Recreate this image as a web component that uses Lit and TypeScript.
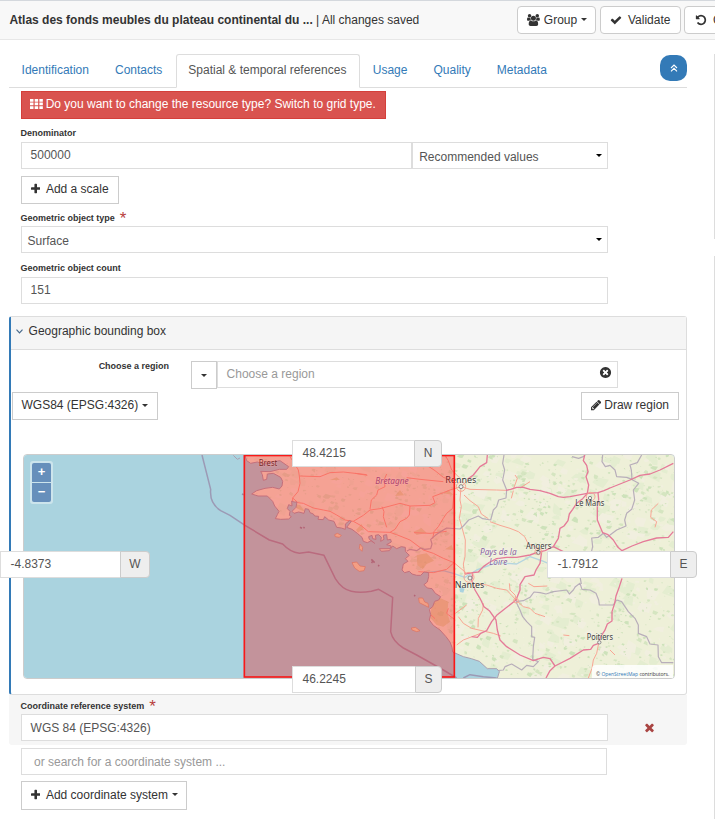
import { LitElement, html, css, svg } from "lit";
import { customElement, property } from "lit/decorators.js";

const ICONS: Record<string, { x?: number; w: number; d: string }> = {
  users: { w: 1920, d: "M593 896q-162 5-265 128h-134q-82 0-138-40.5t-56-118.5q0-353 124-353 6 0 43.5 21t97.5 42.5 119 21.5q67 0 133-23-5 37-5 66 0 139 81 256zm1071 637q0 120-73 189.5t-194 69.5h-874q-121 0-194-69.5t-73-189.5q0-53 3.5-103.5t14-109 26.5-108.5 43-97.5 62-81 85.5-53.5 111.5-20q10 0 43 21.5t73 48 107 48 135 21.5 135-21.5 107-48 73-48 43-21.5q61 0 111.5 20t85.5 53.5 62 81 43 97.5 26.5 108.5 14 109 3.5 103.5zm-1024-1277q0 106-75 181t-181 75-181-75-75-181 75-181 181-75 181 75 75 181zm704 384q0 159-112.5 271.5t-271.5 112.5-271.5-112.5-112.5-271.5 112.5-271.5 271.5-112.5 271.5 112.5 112.5 271.5zm576 225q0 78-56 118.5t-138 40.5h-134q-103-123-265-128 81-117 81-256 0-29-5-66 66 23 133 23 59 0 119-21.5t97.5-42.5 43.5-21q124 0 124 353zm-128-609q0 106-75 181t-181 75-181-75-75-181 75-181 181-75 181 75 75 181z" },
  check: { w: 1792, d: "M1671 566q0 40-28 68l-724 724-136 136q-28 28-68 28t-68-28l-136-136-362-362q-28-28-28-68t28-68l136-136q28-28 68-28t68 28l294 295 656-657q28-28 68-28t68 28l136 136q28 28 28 68z" },
  plus: { x: 192, w: 1408, d: "M1600 736v192q0 40-28 68t-68 28h-416v416q0 40-28 68t-68 28h-192q-40 0-68-28t-28-68v-416h-416q-40 0-68-28t-28-68v-192q0-40 28-68t68-28h416v-416q0-40 28-68t68-28h192q40 0 68 28t28 68v416h416q40 0 68 28t28 68z" },
  times: { w: 1792, d: "M1490 1322q0 40-28 68l-136 136q-28 28-68 28t-68-28l-294-294-294 294q-28 28-68 28t-68-28l-136-136q-28-28-28-68t28-68l294-294-294-294q-28-28-28-68t28-68l136-136q28-28 68-28t68 28l294 294 294-294q28-28 68-28t68 28l136 136q28 28 28 68t-28 68l-294 294 294 294q28 28 28 68z" },
  timesCircle: { w: 1792, d: "M1277 1122q0-26-19-45l-181-181 181-181q19-19 19-45 0-27-19-46l-90-90q-19-19-46-19-26 0-45 19l-181 181-181-181q-19-19-45-19-27 0-46 19l-90 90q-19 19-19 46 0 26 19 45l181 181-181 181q-19 19-19 45 0 27 19 46l90 90q19 19 46 19 26 0 45-19l181-181 181 181q19 19 45 19 27 0 46-19l90-90q19-19 19-46zm387-226q0 209-103 385.5t-279.5 279.5-385.5 103-385.5-103-279.5-279.5-103-385.5 103-385.5 279.5-279.5 385.5-103 385.5 103 279.5 279.5 103 385.5z" },
  pencil: { x: 128, w: 1536, d: "M491 1536l91-91-235-235-91 91v107h128v128h107zm523-928q0-22-22-22-10 0-17 7l-542 542q-7 7-7 17 0 22 22 22 10 0 17-7l542-542q7-7 7-17zm-54-192l416 416-832 832h-416v-416zm683 96q0 53-37 90l-166 166-416-416 166-165q36-38 90-38 53 0 91 38l235 234q37 39 37 91z" },
  undo: { w: 1792, d: "M1664 896q0 156-61 298t-164 245-245 164-298 61q-172 0-327-72.5t-264-204.5q-7-10-6.5-22.5t8.5-20.5l137-138q10-9 25-9 16 2 23 12 73 95 179 147t225 52q104 0 198.5-40.5t163.5-109.5 109.5-163.5 40.5-198.5-40.5-198.5-109.5-163.5-163.5-109.5-198.5-40.5q-98 0-188 35.5t-160 101.5l137 138q31 30 14 69-17 40-59 40h-448q-26 0-45-19t-19-45v-448q0-42 40-59 39-17 69 14l130 129q107-101 244.5-156.5t284.5-55.5q156 0 298 61t245 164 164 245 61 298z" },
  th: { w: 1920, d: "M0 150h520v400H0zM700 150h520v400H700zM1400 150h520v400h-520zM0 690h520v400H0zM700 690h520v400H700zM1400 690h520v400h-520zM0 1230h520v400H0zM700 1230h520v400H700zM1400 1230h520v400h-520z" },
};

const icon = (name: string) => html`<svg class="icon ${name}" viewBox="${ICONS[name].x ?? 0} 0 ${ICONS[name].w} 1792"><path d=${ICONS[name].d}></path></svg>`;
const caret = html`<i class="caret"></i>`;

const LAND =
  "M40 30L50 62 62 70 82 66 100 72 118 66 150 62 176 80 170 88 148 88 120 95 92 94 97 104 100 121 110 118 112 102 130 100 152 112 158 124 156 138 148 147 128 142 105 145 80 152 65 162 84 168 112 168 128 184 134 198 147 214 142 224 136 236 152 238 176 237 184 230 178 226 180 214 172 206 176 194 186 198 185 183 192 186 201 186 198 202 186 214 192 220 206 216 222 220 226 206 236 208 240 218 250 222 254 228 266 229 264 238 280 239 284 230 296 240 312 244 320 262 334 264 346 268 346 252 358 242 364 244 350 262 366 268 382 280 396 292 400 304 412 308 424 302 434 310 418 298 416 290 426 286 428 296 438 298 436 286 446 284 454 292 452 304 462 298 460 286 470 284 472 300 482 298 484 306 470 314 484 318 480 326 448 326 454 334 478 332 488 318 500 326 514 320 526 322 526 334 538 346 526 356 534 364 520 372 516 390 524 398 538 394 546 402 560 406 572 406 582 396 596 398 596 410 592 426 582 434 592 444 606 446 616 460 632 470 626 480 614 484 608 500 598 508 602 524 598 540 610 556 630 570 648 590 660 606 666 622 668 636 700 650 724 656 748 664 772 686 800 686 808 695 800 722 L1350 722V30Z";

/* Vegetation blotches scattered by a seeded generator so the map is stable. */
const blotches = (() => {
  let s = 48271;
  const r = () => (s = (s * 16807) % 2147483647) / 2147483647;
  for (let i = 0; i < 20; i++) r();
  const tone: string[] = ["", "", "", ""];
  for (let i = 0; i < 2600; i++) {
    const x = 40 + r() * 1300;
    const y = 45 + r() * 670;
    const k = i < 500 ? 10 + r() * 16 : 2 + r() * r() * 10;
    const j = () => (0.4 + r() * 0.9) * k;
    const t = i < 500 ? (i % 2) * 2 : i % 5 === 0 ? 2 : i % 5 < 3 ? 1 : 3;
    tone[t] += `M${(x - j()).toFixed(0)} ${y.toFixed(0)}L${(x - k / 3).toFixed(0)} ${(y - j() * 0.8).toFixed(0)} ${(x + j()).toFixed(0)} ${(y - k / 3).toFixed(0)} ${(x + k / 2).toFixed(0)} ${(y + j() * 0.7).toFixed(0)} ${(x - k / 3).toFixed(0)} ${(y + j() * 0.5).toFixed(0)}Z`;
  }
  return tone;
})();

const MAJOR = [
  "M828 151L842 148 860 142 880 142 900 148 930 152 960 160 985 170 1000 172 1020 170 1040 166 1072 160 1104 158 1122 152 1140 144 1170 132 1200 120 1230 106 1260 102 1290 90 1330 70",
  "M1064 45L1060 62 1070 76 1074 95 1068 110 1076 135 1072 160 1058 176 1040 190 1028 208 1018 222 1014 242 1002 258 990 265 985 295 970 320 945 332 920 338 900 345 860 352 830 352 800 356 780 366 760 380 745 396 728 398 705 402",
  "M1104 158L1106 178 1102 200 1102 240 1118 278 1134 284 1150 300 1164 322 1176 332 1206 318 1240 305 1280 294 1315 292 1330 275",
  "M970 320L1000 335 1060 350 M1176 415L1168 440 1158 468 1154 490 1146 515 1146 543 1132 552 1124 572 1112 590 1106 610 1090 616 1082 628 1060 630 1020 655 975 678 960 692 948 714",
  "M728 398L725 420 735 450 750 475 762 500 778 512 798 540 802 570 810 600 830 620 870 645 910 662 940 652 960 656 975 678",
  "M935 335L930 370 918 390 912 405 885 410 870 434 870 450 858 480 820 510 800 526 785 545 770 572 752 580 742 592 725 590",
  "M772 45L770 68 750 80 730 105 712 118",
];
const MINOR = [
  "M180 50L205 90 208 108 270 110 300 98 340 96 410 104",
  "M208 108L210 130 204 155 188 174 188 194",
  "M188 174L204 188 220 190 250 204 280 210 300 214 320 225 345 240 370 244 395 258 415 275 480 277 500 284 540 300 580 330 610 340 640 355 672 368 710 400",
  "M370 244L400 226 420 210 450 206 480 198 510 190 540 198 600 196 615 188 608 170 640 158 660 150 693 140",
  "M420 208L424 180 440 165 444 150 465 140 462 120 470 102",
  "M540 198L538 225 530 235 510 245 495 268 480 277",
  "M575 70L600 82 615 92 640 112 675 125 M530 113L570 118 640 125",
  "M645 45L655 62 665 90 690 115 M672 160L668 205 650 220 640 235 625 260 612 275 608 296",
  "M552 278L600 280 650 274 M565 395L610 398 650 388 672 368",
  "M456 200L462 215 460 230 470 262 M375 100L412 106",
  "M655 505L650 520 656 525 676 540 M602 524L615 536",
  "M693 140L690 180 694 200 688 235 698 270 706 300 705 350 700 372 704 402",
  "M702 165L720 182 745 200 754 222 775 236 M780 245L810 256 840 265 865 275 884 290 895 312 915 320 930 335",
  "M730 430L770 435 800 445 830 450 845 466 858 480",
  "M858 480L880 500 900 505 915 520 945 530 M858 480L856 466 840 450 838 430 M760 490L758 510 745 535 744 562",
  "M685 530L700 550 725 565 790 580 812 588 M710 495L676 520",
  "M752 580L700 600 680 615 M1106 610L1100 640 1090 660 1086 685 1075 714",
  "M1285 190L1264 210 1262 232 1280 245 1275 262 M850 148L862 115 855 105 M870 144L900 125 M895 430L912 440 952 438",
  "M850 152L844 175 M1000 585L1018 587 M1140 630L1155 645 M693 140L720 148 800 150 828 151 M693 140L728 108",
];
const BORDERS = [
  "M530 334L540 328 560 332 572 324 584 328 602 326 606 312 602 298 616 286 630 276 650 264 690 267 700 258 716 240 745 228 758 236 782 240 790 210 800 200 806 180 828 174 830 150 818 120 824 90 818 70 822 45",
  "M858 485L880 482 900 472 912 456 930 458 948 462 970 455 1010 450 1018 462 1030 450 1036 440 1050 430 1056 448 1080 450 1098 460 1106 480 1108 495 1150 495 1160 480 1175 485 1195 515 1215 535 1225 555 1225 580 1250 590 1260 612 1284 615 1285 650 1295 668 1330 668",
  "M858 485L870 510 878 530 890 545 905 560 905 590 914 592 910 620 908 658 925 665 910 680 890 676 875 690 845 672 825 680 820 690 802 692",
  "M1118 45L1116 65 1126 80 1140 76 1155 90 1160 110 1190 112 1206 118 1204 90 1200 75 1222 68 1235 45",
  "M1204 118L1226 130 1210 150 1214 180 1205 208 1190 220 1184 240 1188 258 1160 270 1140 285 1130 292 1120 280 1105 292 1085 294 1088 320 1082 345",
  "M1026 50L1046 55 1060 50 1065 45 M1050 410L1054 432",
];

@customElement("region-map")
export class RegionMap extends LitElement {
  static styles = css`
    :host { display: block; }
    svg { display: block; width: 100%; height: 100%; }
    text { font-family: "Noto Sans", sans-serif; font-size: 24px; fill: #3a3a3a; stroke: #fff; stroke-opacity: 0.4; stroke-width: 3px; paint-order: stroke; }
    .region { font-style: italic; fill: #8a65a0; }
    .sea-fill { fill: #aad3df; }
    .land { fill: #eef0d8; }
    .t0 { fill: #dfebcb; } .t1 { fill: #c8dfb4; } .t2 { fill: #f3efe2; } .t3 { fill: #bddbab; }
    .blot { opacity: 0.66; }
    .major, .minor, .border, .sea, .river { fill: none; stroke-linejoin: round; }
    .major { stroke: #e57a98; stroke-width: 4px; }
    .minor { stroke: #f8a594; stroke-width: 3px; }
    .border { stroke: #b8aeba; stroke-width: 3.6px; }
    .sea { stroke: #9c9ab5; stroke-width: 4.5px; }
    .river { stroke: #b4d5df; stroke-width: 4px; }
    .coast { fill: none; stroke: #aaa0b0; stroke-width: 3px; }
    .marsh { fill: #d3c888; opacity: 0.5; }
    .haze { fill: #f6dcd2; opacity: 0.35; }
    .isle { fill: #eee3bd; stroke: #cf9e83; stroke-width: 2px; }
    .rock { fill: none; stroke: #9390a8; stroke-width: 5px; }
    .town { fill: #eee; stroke: #777; stroke-width: 2.5px; }
    .box { fill: rgba(255, 0, 0, 0.3); stroke: #f81919; stroke-width: 5px; }
  `;

  render() {
    return html`<svg viewBox="-618 45 1950 669" preserveAspectRatio="none">
      <defs><clipPath id="shore"><path d=${LAND}></path></clipPath></defs>
      <rect class="sea-fill" x="-618" y="45" width="1950" height="669"></rect>
      <path class="land" d=${LAND}></path>
      <g clip-path="url(#shore)">
        <g class="blot">${[0, 2, 1, 3].map((t) => svg`<path class="t${t}" d=${blotches[t]}></path>`)}</g>
        <rect class="haze" x="40" y="45" width="633" height="670"></rect>
        <path class="marsh" d="M560 345L590 340 612 362 590 372 578 388 562 375ZM604 500L625 472 655 485 652 520 660 545 640 560 620 555 602 535ZM495 168L510 150 522 166ZM378 270L395 252 400 266 384 278ZM550 275L575 265 590 278 560 285ZM180 190L210 195 225 215 200 205ZM640 160L655 150 670 165ZM300 120L320 112 330 120ZM645 328L665 315 670 330Z"></path>
        <path class="river" d="M590 398L640 392 670 400 705 412 740 390 800 368 860 372 900 350 935 362 990 385 1050 390"></path>
        <path class="sea-fill" d="M688 446L694 440 704 446 700 458 690 456Z"></path>
        ${MINOR.map((d) => svg`<path class="minor" d=${d}></path>`)}
        ${BORDERS.map((d) => svg`<path class="border" d=${d}></path>`)}
        ${MAJOR.map((d) => svg`<path class="major" d=${d}></path>`)}
        <circle class="minor" cx="693" cy="140" r="14"></circle>
        <circle class="minor" cx="717" cy="412" r="15"></circle>
        <circle class="minor" cx="1082" cy="170" r="13"></circle>
        <circle class="minor" cx="925" cy="334" r="10"></circle>
        <circle class="minor" cx="858" cy="482" r="7"></circle>
      </g>
      <path class="coast" d=${LAND}></path>
      <path class="isle" d="M366 368L380 366 390 378 406 380 402 392 388 394 374 384ZM314 284L322 280 334 286 328 292 316 290ZM544 564L556 562 570 572 560 575 546 570ZM566 474L578 474 584 486 594 490 596 502 584 496 568 488ZM390 312L398 322 396 334 388 326Z"></path>
      <path class="rock" d="M424 358l6 6 4 4M444 376l4 2M210 262l6 3M220 262l4 2M552 466l4 2M36 162l5 2M424 366l4 2"></path>
      <path class="coast" d="M10 46L22 58 30 54"></path>
      <path class="sea" d="M-84 45L-58 148Q-62 190 -28 212L0 226 45 256 118 300 158 312Q180 336 208 340L236 336 282 346 316 416Q336 448 364 454 390 460 424 454L446 448 488 472 482 575Q488 604 520 624L560 645 640 690 680 714 M700 714L720 704 760 710 800 714"></path>
      <circle class="town" cx="693" cy="140" r="6"></circle>
      <circle class="town" cx="720" cy="414" r="6"></circle>
      <circle class="town" cx="1080" cy="174" r="5"></circle>
      <circle class="town" cx="925" cy="338" r="5"></circle>
      <circle class="town" cx="1108" cy="607" r="5"></circle>
      <text x="86" y="79" textLength="56" lengthAdjust="spacingAndGlyphs">Brest</text>
      <text class="region" x="436" y="131" textLength="100" lengthAdjust="spacingAndGlyphs">Bretagne</text>
      <text x="646" y="129" textLength="93" lengthAdjust="spacingAndGlyphs">Rennes</text>
      <text x="1036" y="198" textLength="87" lengthAdjust="spacingAndGlyphs">Le Mans</text>
      <text x="888" y="328" textLength="76" lengthAdjust="spacingAndGlyphs">Angers</text>
      <text x="674" y="445" textLength="89" lengthAdjust="spacingAndGlyphs">Nantes</text>
      <text x="1070" y="599" textLength="79" lengthAdjust="spacingAndGlyphs">Poitiers</text>
      <text class="region" x="750" y="344" textLength="110" lengthAdjust="spacingAndGlyphs">Pays de la</text>
      <text class="region" x="778" y="374" textLength="54" lengthAdjust="spacingAndGlyphs">Loire</text>
      <rect class="box" x="43" y="46.5" width="630" height="664.5"></rect>
    </svg>`;
  }
}

@customElement("coord-field")
export class CoordField extends LitElement {
  @property() value = "";
  @property() side = "";
  static styles = css`
    :host { display: flex; height: 27px; box-sizing: border-box; font: 12px/25px "Liberation Sans", Arial, sans-serif; color: #555; }
    .value { flex: 1; box-sizing: border-box; border: 1px solid #ddd; border-right: 0; background: #fff; padding-left: 9.5px; }
    .side { min-width: 27px; box-sizing: border-box; border: 1px solid #ccc; border-radius: 0 4px 4px 0; background: #eee; padding: 0 8.5px; text-align: center; }
  `;
  render() {
    return html`<div class="value">${this.value}</div><div class="side">${this.side}</div>`;
  }
}

@customElement("app-root")
export class AppRoot extends LitElement {
  static styles = css`
    :host { display: block; height: 819px; overflow: hidden; background: #fff; font: 12px/18px "Liberation Sans", Arial, sans-serif; color: #333; }
    * { box-sizing: border-box; }
    .icon { display: inline-block; height: 12px; width: auto; fill: currentColor; flex: none; }
    .header { height: 40px; display: flex; align-items: center; padding: 0 0 0 9.4px; border-top: 1px solid #d4d8dd; border-bottom: 1px solid #e7e7e7; background: #f8f8f8; overflow: hidden; white-space: pre; }
    .title { width: 507.6px; flex: none; }
    .btn { display: flex; align-items: center; height: 28px; border: 1px solid #ccc; background: #fff; padding: 0 9px 2px; white-space: nowrap; flex: none; width: max-content; }
    .header .btn { border-radius: 4px; padding-bottom: 1px; margin-right: 4px; }
    .header .validate { width: 81px; margin-right: 3px; }
    .header .group { width: 79px; }
    .caret { width: 0; height: 0; border: 3px solid transparent; border-top-color: currentColor; border-bottom: 0; margin-left: 4px; flex: none; }
    .users { margin-right: 4px; } .check { margin-right: 6px; } .plus { margin-right: 6px; } .pencil { margin-right: 3px; } .undo { margin: 0 6px 0 1px; } .th { margin-right: 2.5px; }
    .page { display: flex; justify-content: space-between; height: 779px; }
    .main { width: 678px; margin-left: 9px; padding-top: 14px; }
    .rail { width: 1px; display: flex; flex-direction: column; gap: 17px; padding-top: 14px; }
    .rail div { background: #ddd; height: 185px; }
    .rail div + div { flex: 1; height: auto; }
    .tabs { display: flex; height: 34px; border-bottom: 1px solid #ddd; }
    .tab { height: 34px; padding: 6px 12px 0 11.6px; margin-right: 0.4px; border: 1px solid transparent; color: #337ab7; white-space: nowrap; }
    .tab.active { color: #555; border-color: #ddd; border-bottom-color: #fff; border-radius: 3px 3px 0 0; background: #fff; padding-right: 12.4px; }
    .toggle { margin-left: auto; margin-top: 1px; width: 27px; height: 26px; border-radius: 10px; background: #337ab7; display: flex; align-items: center; justify-content: center; }
    .toggle svg { width: 8px; height: 8px; fill: none; stroke: #fff; stroke-width: 1.1px; }
    .body { padding-left: 12px; }
    .danger { margin-top: 3px; background: #d9534f; border-color: #d43f3a; color: #fff; width: 365px; padding-left: 8.3px; }
    .label { font-size: 9px; font-weight: bold; line-height: 13px; height: 13px; display: flex; letter-spacing: -0.01px; }
    .body > .label, .crs .label { margin-left: -0.5px; }
    .req { color: #b8403c; font-size: 17px; font-weight: normal; margin: 0 0 0 5px; }
    .field { height: 27px; border: 1px solid #ddd; background: #fff; color: #555; padding: 3px 8.6px; display: flex; line-height: 18px; width: 587px; white-space: pre; }
    .select { padding: 5px 5px 0 5.6px; justify-content: space-between; }
    .select .caret { color: #000; margin-top: 6px; }
    .ph { color: #999; }
    .row { display: flex; }
    .denominator { margin-top: 8px; }
    .scale { margin-top: 2px; }
    .scale .field { width: 391px; }
    .scale .select { width: 196px; padding-left: 6.2px; }
    .add-scale { margin-top: 7px; padding-left: 8.5px; width: 98px; }
    .type { margin-top: 8px; }
    .type + .field { margin-top: 1px; }
    .count { margin-top: 9px; }
    .count + .field { margin-top: 2px; }
    .search { width: 586px; margin-top: 3px; padding: 4px 12px; }
    .add-crs { margin-top: 6px; height: 29px; padding-left: 8.5px; width: 166px; }
    .panel { position: relative; margin-top: 12px; height: 379px; border: 1px solid #ddd; border-left: 2px solid #337ab7; border-radius: 3px; }
    .phead { height: 33px; background: #f5f5f5; border-bottom: 1px solid #ddd; padding: 5px 5px; display: flex; }
    .phead svg { width: 7px; height: 5px; margin: 7px 5.6px 0 0; fill: none; stroke: #476a8c; stroke-width: 1.2px; }
    .choose { display: flex; height: 28px; margin-top: 11px; }
    .choose .label { width: 158px; justify-content: flex-end; margin-right: 22px; margin-top: -1px; }
    .choose .btn { width: 26px; }
    .choose .btn .caret { margin: 2px 0 0 0; }
    .choose .field { width: 401px; }
    .choose .timesCircle { margin: 1px -3.5px 0 auto; color: #333; height: 13px; }
    .tools { display: flex; justify-content: space-between; margin: 3px 7px 0 1px; }
    .crs-pick { width: 146px; padding-left: 8.5px; }
    .draw { width: 98px; }
    .mapwrap { position: relative; margin: 34px 11px 0 12px; height: 225px; border: 1px solid #ccc; border-radius: 4px; }
    region-map { height: 100%; border-radius: 3px; overflow: hidden; }
    coord-field { position: absolute; z-index: 1; width: 150px; }
    .n { left: 268px; top: -15px; } .s { left: 268px; bottom: -15px; }
    .w { left: -24px; top: 96px; } .e { left: 523px; top: 96px; }
    .zoom { position: absolute; left: 6px; top: 6px; width: 23px; height: 43px; padding: 2px; border-radius: 3px; background: rgba(255,255,255,.4); display: flex; flex-direction: column; gap: 1px; }
    .zoom div { flex: 1; background: #668fbb; color: #fff; border-radius: 2px 2px 0 0; font-weight: bold; font-size: 13px; line-height: 18px; text-align: center; }
    .zoom div + div { border-radius: 0 0 2px 2px; }
    .attr { position: absolute; right: 1px; bottom: 0; width: 81px; height: 13px; padding-left: 4px; background: rgba(255,255,255,.85); border-radius: 4px 0 0 0; font-size: 5px; line-height: 18px; white-space: nowrap; font-family: "Open Sans", sans-serif; letter-spacing: -0.03px; }
    .attr span { color: #337ab7; }
    .crs { height: 50px; background: #f6f6f6; padding: 5px 0 0 12px; border-radius: 0 0 3px 3px; }
    .crs .row { margin-top: 1px; }
    .crs .field { padding-top: 4px; }
    .crs .times { color: #a94442; height: 13px; margin: 7px 0 0 35px; }
  `;

  render() {
    return html`
      <div class="header">
        <div class="title"><b>Atlas des fonds meubles du plateau continental du ...</b> | All changes saved</div>
        <div class="btn group">${icon("users")}Group${caret}</div>
        <div class="btn validate">${icon("check")}Validate</div>
        <div class="btn">${icon("undo")}C</div>
      </div>
      <div class="page">
        <div class="main">
          <div class="tabs">
            ${["Identification", "Contacts", "Spatial & temporal references", "Usage", "Quality", "Metadata"].map(
              (t, i) => html`<div class="tab ${i === 2 ? "active" : ""}">${t}</div>`
            )}
            <div class="toggle"><svg viewBox="0 0 8 8"><path d="M1 4L4 1 7 4M1 7.3L4 4.3 7 7.3"></path></svg></div>
          </div>
          <div class="body">
            <div class="btn danger">${icon("th")}Do you want to change the resource type? Switch to grid type.</div>
            <div class="label denominator">Denominator</div>
            <div class="row scale">
              <div class="field">500000</div>
              <div class="field select">Recommended values${caret}</div>
            </div>
            <div class="btn add-scale">${icon("plus")}Add a scale</div>
            <div class="label type">Geometric object type<span class="req">*</span></div>
            <div class="field select">Surface${caret}</div>
            <div class="label count">Geometric object count</div>
            <div class="field">151</div>
          </div>
          <div class="panel">
            <div class="phead"><svg viewBox="0 0 7 5"><path d="M.5 .7L3.5 3.8 6.5 .7"></path></svg>Geographic bounding box</div>
            <div class="choose">
              <div class="label">Choose a region</div>
              <div class="btn">${caret}</div>
              <div class="field ph">Choose a region${icon("timesCircle")}</div>
            </div>
            <div class="tools">
              <div class="btn crs-pick">WGS84 (EPSG:4326)${caret}</div>
              <div class="btn draw">${icon("pencil")}Draw region</div>
            </div>
            <div class="mapwrap">
              <region-map></region-map>
              <div class="zoom"><div>+</div><div>−</div></div>
              <div class="attr">© <span>OpenStreetMap</span> contributors.</div>
              <coord-field class="n" value="48.4215" side="N"></coord-field>
              <coord-field class="s" value="46.2245" side="S"></coord-field>
              <coord-field class="w" value="-4.8373" side="W"></coord-field>
              <coord-field class="e" value="-1.7912" side="E"></coord-field>
            </div>
          </div>
          <div class="crs">
            <div class="label">Coordinate reference system<span class="req">*</span></div>
            <div class="row"><div class="field">WGS 84 (EPSG:4326)</div>${icon("times")}</div>
          </div>
          <div class="body">
            <div class="field ph search">or search for a coordinate system ...</div>
            <div class="btn add-crs">${icon("plus")}Add coordinate system${caret}</div>
          </div>
        </div>
        <div class="rail"><div></div><div></div></div>
      </div>
    `;
  }
}
